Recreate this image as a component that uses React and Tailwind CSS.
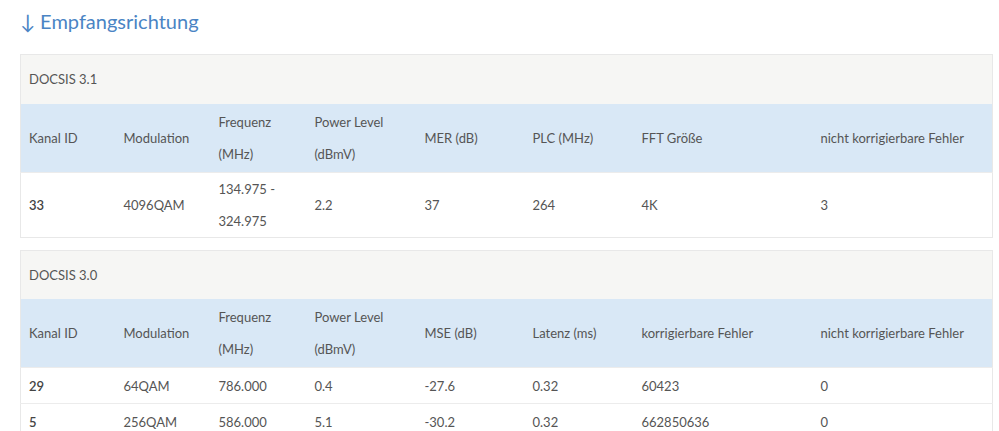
import React from 'react';

const widths = ['w-[95px]', 'w-[95px]', 'w-[96px]', 'w-[110px]', 'w-[108px]', 'w-[109px]', 'w-[179px]', 'w-[180px]'];

const docsis31 = {
  title: 'DOCSIS 3.1',
  headers: [
    'Kanal ID',
    'Modulation',
    ['Frequenz', '(MHz)'],
    ['Power Level', '(dBmV)'],
    'MER (dB)',
    'PLC (MHz)',
    'FFT Größe',
    'nicht korrigierbare Fehler'
  ],
  rows: [['33', '4096QAM', ['134.975 -', '324.975'], '2.2', '37', '264', '4K', '3']]
};

const docsis30 = {
  title: 'DOCSIS 3.0',
  headers: [
    'Kanal ID',
    'Modulation',
    ['Frequenz', '(MHz)'],
    ['Power Level', '(dBmV)'],
    'MSE (dB)',
    'Latenz (ms)',
    'korrigierbare Fehler',
    'nicht korrigierbare Fehler'
  ],
  rows: [
    ['29', '64QAM', '786.000', '0.4', '-27.6', '0.32', '60423', '0'],
    ['5', '256QAM', '586.000', '5.1', '-30.2', '0.32', '662850636', '0']
  ]
};

function Cell({ value }) {
  if (Array.isArray(value)) {
    return (
      <>
        {value[0]}
        <br />
        {value[1]}
      </>
    );
  }
  return value;
}

function ChannelTable({ data }) {
  return (
    <table className="w-[972px] table-fixed border-collapse border border-[#e8e8e8] text-[13px] leading-[32px] text-[#555]">
      <colgroup>
        {widths.map((w, i) => (
          <col key={i} className={w} />
        ))}
      </colgroup>
      <thead>
        <tr className="bg-[#f6f6f4]">
          <th colSpan="8" className="h-[49px] px-2 text-left font-normal">
            {data.title}
          </th>
        </tr>
        <tr className="bg-[#d9e8f6]">
          {data.headers.map((h, i) => (
            <th key={i} className="px-2 py-[2px] text-left align-middle font-normal">
              <Cell value={h} />
            </th>
          ))}
        </tr>
      </thead>
      <tbody>
        {data.rows.map((row, r) => (
          <tr key={r} className="border-t border-[#ececec] bg-white">
            {row.map((v, i) => (
              <td key={i} className={`h-[36px] px-2 py-0 align-middle ${i === 0 ? 'font-semibold text-[#444]' : ''}`}>
                <Cell value={v} />
              </td>
            ))}
          </tr>
        ))}
      </tbody>
    </table>
  );
}

export default function App() {
  return (
    <div className="min-h-[431px] bg-white px-5 pt-[7px]" style={{ fontFamily: 'Lato, "Noto Sans", sans-serif' }}>
      <h2 className="mb-[19px] text-[20px] leading-[28px] text-[#4a84c4]">↓ Empfangsrichtung</h2>
      <div className="flex flex-col gap-[12px]">
        <ChannelTable data={docsis31} />
        <ChannelTable data={docsis30} />
      </div>
    </div>
  );
}
